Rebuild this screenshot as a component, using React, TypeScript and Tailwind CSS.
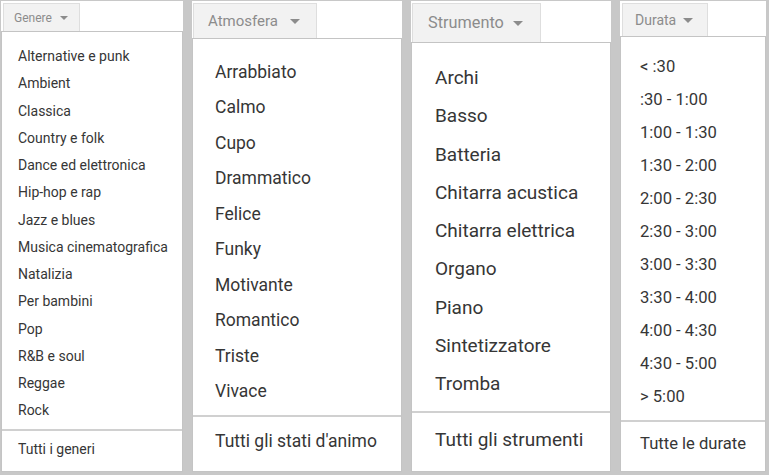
import React from 'react';

type Panel = {
  label: string;
  items: string[];
  footer: string;
  panelClass: string;
  tabClass: string;
  tabTextClass: string;
  arrowClass: string;
  listClass: string;
  itemClass: string;
  footerClass: string;
};

const panels: Panel[] = [
  {
    label: 'Genere',
    items: [
      'Alternative e punk',
      'Ambient',
      'Classica',
      'Country e folk',
      'Dance ed elettronica',
      'Hip-hop e rap',
      'Jazz e blues',
      'Musica cinematografica',
      'Natalizia',
      'Per bambini',
      'Pop',
      'R&B e soul',
      'Reggae',
      'Rock',
    ],
    footer: 'Tutti i generi',
    panelClass: 'w-[182px]',
    tabClass: 'ml-[2px] mt-[2px] h-[28px] pl-[10px] pr-[11px] gap-[8px]',
    tabTextClass: 'text-[12px]',
    arrowClass: 'border-l-[4px] border-r-[4px] border-t-[4px]',
    listClass: 'pt-[11px] pb-[4px] pl-[16px] text-[14px]',
    itemClass: 'leading-[27.25px]',
    footerClass: 'pt-[5px] pl-[16px] text-[14px] leading-[27px]',
  },
  {
    label: 'Atmosfera',
    items: [
      'Arrabbiato',
      'Calmo',
      'Cupo',
      'Drammatico',
      'Felice',
      'Funky',
      'Motivante',
      'Romantico',
      'Triste',
      'Vivace',
    ],
    footer: "Tutti gli stati d'animo",
    panelClass: 'w-[210px]',
    tabClass: 'ml-[1px] mt-[2px] h-[35px] pl-[14px] pr-[16px] gap-[12px]',
    tabTextClass: 'text-[15px]',
    arrowClass: 'border-l-[5px] border-r-[5px] border-t-[5px]',
    listClass: 'pt-[16px] pb-[6px] pl-[22px] text-[17.5px]',
    itemClass: 'leading-[35.44px]',
    footerClass: 'pt-[7px] pl-[22px] text-[17.5px] leading-[35px]',
  },
  {
    label: 'Strumento',
    items: [
      'Archi',
      'Basso',
      'Batteria',
      'Chitarra acustica',
      'Chitarra elettrica',
      'Organo',
      'Piano',
      'Sintetizzatore',
      'Tromba',
    ],
    footer: 'Tutti gli strumenti',
    panelClass: 'w-[200px]',
    tabClass: 'ml-[1px] mt-[2px] h-[39px] pl-[15px] pr-[17px] gap-[9px]',
    tabTextClass: 'text-[16.3px]',
    arrowClass: 'border-l-[5px] border-r-[5px] border-t-[5px]',
    listClass: 'pt-[16px] pb-[8px] pl-[23px] text-[19px]',
    itemClass: 'leading-[38.25px]',
    footerClass: 'pt-[8px] pl-[23px] text-[19px] leading-[38px]',
  },
  {
    label: 'Durata',
    items: [
      '< :30',
      ':30 - 1:00',
      '1:00 - 1:30',
      '1:30 - 2:00',
      '2:00 - 2:30',
      '2:30 - 3:00',
      '3:00 - 3:30',
      '3:30 - 4:00',
      '4:00 - 4:30',
      '4:30 - 5:00',
      '> 5:00',
    ],
    footer: 'Tutte le durate',
    panelClass: 'w-[146px]',
    tabClass: 'ml-[2px] mt-[2px] h-[33px] pl-[12px] pr-[14px] gap-[7px]',
    tabTextClass: 'text-[14px]',
    arrowClass: 'border-l-[5px] border-r-[5px] border-t-[5px]',
    listClass: 'pt-[13px] pb-[7px] pl-[19px] text-[16.6px]',
    itemClass: 'leading-[33px]',
    footerClass: 'pt-[5px] pl-[19px] text-[16.6px] leading-[33px]',
  },
];

const DropdownPanel = ({ panel }: { panel: Panel }) => (
  <div className={`${panel.panelClass} h-full bg-white flex flex-col`}>
    {/* Tab button */}
    <div className="flex">
      <div
        className={`${panel.tabClass} flex items-center bg-[#f2f2f2] border border-b-0 border-[#dedede]`}
      >
        <span className={`${panel.tabTextClass} text-[#8c8c8c]`}>{panel.label}</span>
        <span
          className={`${panel.arrowClass} w-0 h-0 border-l-transparent border-r-transparent border-t-[#8c8c8c]`}
        />
      </div>
    </div>

    {/* Menu */}
    <div className="flex-1 flex flex-col border border-[#c4c4c4] bg-white text-[#363636]">
      <div className={panel.listClass}>
        {panel.items.map(item => (
          <div key={item} className={`${panel.itemClass} whitespace-nowrap`}>
            {item}
          </div>
        ))}
      </div>
      <div className="h-[2px] bg-[#d0d0d0]" />
      <div className={`${panel.footerClass} whitespace-nowrap`}>{panel.footer}</div>
    </div>
  </div>
);

export default function App() {
  return (
    <div
      className="w-[769px] h-[475px] bg-[#c8c8c8] flex gap-[9px] pl-[1px] pt-[1px] pb-[3px] overflow-hidden"
      style={{ fontFamily: 'Roboto, "Noto Sans", sans-serif' }}
    >
      {panels.map(p => (
        <DropdownPanel key={p.label} panel={p} />
      ))}
    </div>
  );
}
